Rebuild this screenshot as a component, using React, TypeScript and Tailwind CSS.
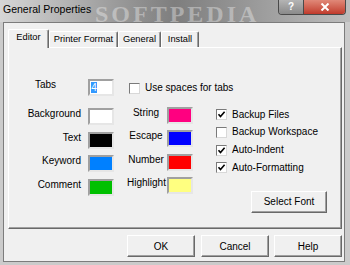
import React from "react";

const raised =
  "bg-[#f0f0f0] border border-t-white border-l-white border-r-[#696969] border-b-[#696969] shadow-[inset_-1px_-1px_0_#a0a0a0]";
const sunken =
  "border-2 border-t-[#a0a0a0] border-l-[#a0a0a0] border-r-[#e6e6e6] border-b-[#e6e6e6]";

const tabs = [
  { label: "Editor", w: "w-[41px]", active: true },
  { label: "Printer Format", w: "w-[69px]" },
  { label: "General", w: "w-[43px]" },
  { label: "Install", w: "w-[38px]" },
];

const leftColors = [
  { label: "Background", color: "bg-white" },
  { label: "Text", color: "bg-black" },
  { label: "Keyword", color: "bg-[#0080ff]" },
  { label: "Comment", color: "bg-[#00c000]" },
];

const midColors = [
  { label: "String", color: "bg-[#ff0080]" },
  { label: "Escape", color: "bg-[#0000ff]" },
  { label: "Number", color: "bg-[#ff0000]" },
  { label: "Highlight", color: "bg-[#ffff80]" },
];

const options = [
  { label: "Backup Files", checked: true },
  { label: "Backup Workspace", checked: false },
  { label: "Auto-Indent", checked: true },
  { label: "Auto-Formatting", checked: true },
];

function Check({ label, checked }: { label: string; checked?: boolean }) {
  return (
    <div className="flex items-center gap-[5px]">
      <div className="w-[11px] h-[11px] bg-white border border-t-[#7a7a7a] border-l-[#7a7a7a] border-r-[#d8d8d8] border-b-[#d8d8d8] flex items-center justify-center">
        {checked && (
          <svg width="9" height="9" viewBox="0 0 9 9">
            <path d="M1.5 4.2 L3.5 6.5 L7.6 1.8" stroke="#000" strokeWidth="1.6" fill="none" />
          </svg>
        )}
      </div>
      <span className="leading-[12px] whitespace-nowrap">{label}</span>
    </div>
  );
}

export default function App() {
  return (
    <div className="relative w-[350px] h-[265px] overflow-hidden bg-[#cbcbcb] font-['Liberation_Sans',Arial,sans-serif] text-[10px] text-black">
      {/* Title bar */}
      <div className="relative h-[22px] flex items-start bg-gradient-to-r from-[#d6d6d6] via-[#7e7e7e] to-[#bdbdbd]">
        <span className="absolute left-[95px] top-[-4px] font-['Liberation_Serif',serif] font-bold text-[24px] tracking-[3px] text-white/35 pointer-events-none">
          SOFTPEDIA
        </span>
        <span className="relative pl-[3px] pt-[3px] text-[10.5px] leading-[13px]">General Properties</span>
        <div className="relative ml-auto mr-[4px] flex rounded-b-[4px] overflow-hidden border border-t-0 border-[#4a4a4a]">
          <div className="w-[25px] h-[14px] bg-gradient-to-b from-[#b4b4b4] to-[#8a8a8a] border-r border-[#4a4a4a] flex items-center justify-center text-white font-bold text-[10px] leading-none">
            ?
          </div>
          <div className="w-[41px] h-[14px] bg-gradient-to-b from-[#e08878] to-[#c0392b] flex items-center justify-center">
            <svg width="10" height="8" viewBox="0 0 10 8">
              <path d="M1.5 0.5 L8.5 7.5 M8.5 0.5 L1.5 7.5" stroke="#fff" strokeWidth="2" />
            </svg>
          </div>
        </div>
      </div>

      {/* Client area */}
      <div className="ml-[3px] w-[342px] h-[240px] border border-[#7c7c7c] bg-[#f0f0f0] pl-[4px] pt-[6px]">
        {/* Tabs */}
        <div className="flex items-end h-[18px]">
          {tabs.map((t) =>
            t.active ? (
              <div
                key={t.label}
                className={`relative z-10 ${t.w} h-[19px] -mb-[1px] bg-[#f0f0f0] border-t border-l border-t-white border-l-white border-r border-r-[#696969] shadow-[inset_-1px_0_0_#a0a0a0] rounded-t-[2px] flex items-center justify-center pb-[2px] text-[9.3px]`}
              >
                {t.label}
              </div>
            ) : (
              <div
                key={t.label}
                className={`${t.w} h-[16px] bg-[#f0f0f0] border-t border-l border-t-white border-l-white border-r border-r-[#696969] shadow-[inset_-1px_0_0_#a0a0a0] rounded-t-[2px] flex items-center justify-center text-[9.3px] whitespace-nowrap`}
              >
                {t.label}
              </div>
            )
          )}
        </div>

        {/* Panel */}
        <div className={`relative w-[334px] h-[182px] ${raised} pt-[31px]`}>
          {/* Tabs row */}
          <div className="flex items-start h-[17px]">
            <span className="w-[47px] text-right leading-[12px]">Tabs</span>
            <div className={`ml-[32px] w-[26px] h-[17px] bg-white ${sunken} pl-[1px] pt-[1px]`}>
              <span className="block w-[6px] h-[11px] bg-[#3399ff] text-white leading-[11px] text-center">4</span>
            </div>
            <div className="ml-[15px] mt-[3px]">
              <Check label="Use spaces for tabs" />
            </div>
          </div>

          {/* Colour & option columns */}
          <div className="flex items-start mt-[12px]">
            <div className="flex flex-col gap-[6.67px]">
              {leftColors.map((c) => (
                <div key={c.label} className="flex items-start">
                  <span className="w-[72px] text-right leading-[12px]">{c.label}</span>
                  <div className={`ml-[7px] w-[26px] h-[17px] ${c.color} ${sunken}`} />
                </div>
              ))}
            </div>

            <div className="ml-[13px] -mt-[1px] flex flex-col gap-[6.33px]">
              {midColors.map((c) => (
                <div key={c.label} className="flex items-start">
                  <span className="w-[38px] text-center leading-[12px]">{c.label}</span>
                  <div className={`ml-[2px] w-[26px] h-[17px] ${c.color} ${sunken}`} />
                </div>
              ))}
            </div>

            <div className="ml-[23px] -mt-[2px] flex flex-col">
              {options.map((o) => (
                <div key={o.label} className="h-[17.67px] flex items-center">
                  <Check label={o.label} checked={o.checked} />
                </div>
              ))}
              <button className={`ml-[35px] mt-[14px] w-[76px] h-[22px] ${raised} text-[10px]`}>
                Select Font
              </button>
            </div>
          </div>
        </div>

        {/* Dialog buttons */}
        <div className="w-[334px] mt-[6px] flex justify-end gap-[5px]">
          <button className={`mr-[1px] w-[68px] h-[22px] ${raised}`}>OK</button>
          <button className={`w-[68px] h-[22px] ${raised}`}>Cancel</button>
          <button className={`w-[68px] h-[22px] ${raised}`}>Help</button>
        </div>
      </div>
    </div>
  );
}
